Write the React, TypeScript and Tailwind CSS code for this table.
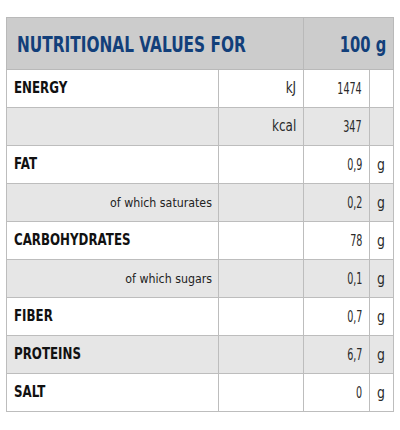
const rows = [
  { label: 'ENERGY', unit: 'kJ', value: '1474', g: '', sub: false },
  { label: '', unit: 'kcal', value: '347', g: '', sub: false },
  { label: 'FAT', unit: '', value: '0,9', g: 'g', sub: false },
  { label: 'of which saturates', unit: '', value: '0,2', g: 'g', sub: true },
  { label: 'CARBOHYDRATES', unit: '', value: '78', g: 'g', sub: false },
  { label: 'of which sugars', unit: '', value: '0,1', g: 'g', sub: true },
  { label: 'FIBER', unit: '', value: '0,7', g: 'g', sub: false },
  { label: 'PROTEINS', unit: '', value: '6,7', g: 'g', sub: false },
  { label: 'SALT', unit: '', value: '0', g: 'g', sub: false },
];

// condensed look: the narrow face isn't installed, so squeeze horizontally
const Narrow = ({ children, className }: { children: React.ReactNode; className: string }) => (
  <span className={`inline-block whitespace-nowrap ${className}`}>{children}</span>
);

export default function App() {
  return (
    <div
      className="w-[400px] h-[430px] bg-white pt-[17px] pl-[6px]"
      style={{ fontFamily: '"DejaVu Sans", sans-serif' }}
    >
      <table className="border-collapse w-[388px] table-fixed">
        <colgroup>
          <col className="w-[212px]" />
          <col className="w-[85px]" />
          <col className="w-[66px]" />
          <col className="w-[24px]" />
        </colgroup>
        <thead>
          <tr className="h-[52px] bg-[#cccccc]">
            <th
              colSpan={2}
              className="border border-[#b9b9b9] text-left pl-[10px] pt-[5px] text-[21px] font-bold text-[#123f7a]"
            >
              <Narrow className="scale-x-[0.73] origin-left">NUTRITIONAL VALUES FOR</Narrow>
            </th>
            <th
              colSpan={2}
              className="border border-[#b9b9b9] text-right pr-[7px] pt-[5px] text-[21px] font-bold text-[#123f7a]"
            >
              <Narrow className="scale-x-[0.7] origin-right">100 g</Narrow>
            </th>
          </tr>
        </thead>
        <tbody>
          {rows.map((r, i) => (
            <tr key={i} className={`h-[38px] ${i % 2 === 1 ? 'bg-[#e6e6e6]' : 'bg-white'}`}>
              <td
                className={`border border-[#bdbdbd] ${
                  r.sub
                    ? 'text-right pr-[6px] text-[13px] text-[#222]'
                    : 'text-left pl-[7px] text-[15px] font-bold text-[#111]'
                }`}
              >
                {r.sub ? (
                  <Narrow className="scale-x-[0.85] origin-right">{r.label}</Narrow>
                ) : (
                  <Narrow className="scale-x-[0.79] origin-left">{r.label}</Narrow>
                )}
              </td>
              <td className="border border-[#bdbdbd] text-right pr-[7px] text-[15px] text-[#2a2a2a]">
                <Narrow className="scale-x-[0.8] origin-right">{r.unit}</Narrow>
              </td>
              <td className="border border-[#bdbdbd] text-right pr-[7px] text-[16px] text-[#2a2a2a]">
                <Narrow className="scale-x-[0.6] origin-right">{r.value}</Narrow>
              </td>
              <td className="border border-[#bdbdbd] text-center text-[16px] text-[#2a2a2a]">
                <Narrow className="scale-x-[0.78] origin-center">{r.g}</Narrow>
              </td>
            </tr>
          ))}
        </tbody>
      </table>
    </div>
  );
}
